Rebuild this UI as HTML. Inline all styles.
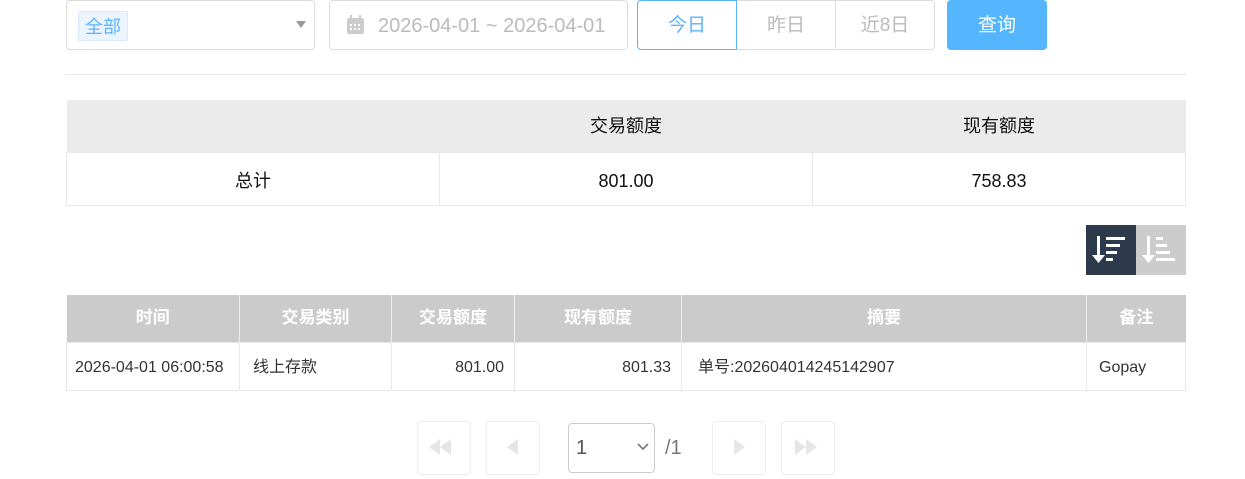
<!DOCTYPE html>
<html><head><meta charset="utf-8"><style>
body{margin:0;width:1245px;height:479px;background:#fff;font-family:"Liberation Sans","Noto Sans CJK SC",sans-serif;position:relative;overflow:hidden;color:#333}
.a{position:absolute;box-sizing:border-box}
table{border-collapse:collapse;position:absolute;table-layout:fixed}
td{box-sizing:border-box;vertical-align:middle;line-height:20px;white-space:nowrap;overflow:hidden}
.r td{padding-top:5px}
</style></head><body>
<div class="a" style="left:66px;top:0;width:249px;height:50px;border:1px solid #dcdcdc;border-radius:4px"></div>
<div class="a" style="left:78px;top:11px;width:50px;height:30px;background:#ecf5ff;border:1px solid #d9ecff;border-radius:2px;color:#5cb3ff;font-size:18px;line-height:30px;text-align:center">全部</div>
<div class="a" style="left:296px;top:21px;width:0;height:0;border-left:5px solid transparent;border-right:5px solid transparent;border-top:7px solid #999"></div>
<div class="a" style="left:329px;top:0;width:299px;height:50px;border:1px solid #dcdcdc;border-radius:4px"></div>
<svg class="a" style="left:345px;top:14px" width="22" height="22" viewBox="0 0 22 22"><rect x="2" y="4" width="17" height="16" rx="2" fill="#ccc"/><rect x="5" y="1" width="2" height="6" fill="#ccc"/><rect x="14" y="1" width="2" height="6" fill="#ccc"/><g fill="#fff"><rect x="5" y="10" width="2" height="2"/><rect x="9" y="10" width="2" height="2"/><rect x="13" y="10" width="2" height="2"/><rect x="5" y="14" width="2" height="2"/><rect x="9" y="14" width="2" height="2"/><rect x="13" y="14" width="2" height="2"/></g></svg>
<div class="a" style="left:378px;top:13px;font-size:20px;color:#bbb;line-height:26px">2026-04-01 ~ 2026-04-01</div>
<div class="a" style="left:637px;top:0;width:298px;height:50px;border:1px solid #dcdcdc;border-radius:4px"></div>
<div class="a" style="left:736px;top:0;width:1px;height:50px;background:#dcdcdc"></div>
<div class="a" style="left:835px;top:0;width:1px;height:50px;background:#dcdcdc"></div>
<div class="a" style="left:637px;top:0;width:100px;height:50px;border:1px solid #5cb3ff;border-radius:4px 0 0 4px;color:#5cb3ff;font-size:19px;line-height:50px;text-align:center">今日</div>
<div class="a" style="left:736px;top:0;width:100px;height:50px;color:#bbb;font-size:19px;line-height:52px;text-align:center">昨日</div>
<div class="a" style="left:835px;top:0;width:100px;height:50px;color:#bbb;font-size:19px;line-height:52px;text-align:center">近8日</div>
<div class="a" style="left:947px;top:0;width:100px;height:50px;background:#56b6fd;border-radius:4px;color:#fff;font-size:19px;line-height:52px;text-align:center">查询</div>
<div class="a" style="left:66px;top:74px;width:1120px;height:1px;background:#e8e8e8"></div>

<table style="left:66px;top:100px;width:1120px;font-size:18px;color:#111;text-align:center">
<tr style="background:#ebebeb;height:52px"><td style="width:373px"></td><td style="width:373px">交易额度</td><td>现有额度</td></tr>
<tr class="r" style="height:53px"><td style="border:1px solid #e8e8e8">总计</td><td style="border:1px solid #e8e8e8">801.00</td><td style="border:1px solid #e8e8e8">758.83</td></tr>
</table>

<div class="a" style="left:1086px;top:225px;width:50px;height:50px;background:#2d3a4b"></div>
<div class="a" style="left:1136px;top:225px;width:50px;height:50px;background:#ccc"></div>
<svg class="a" style="left:1086px;top:225px" width="100" height="50" viewBox="0 0 100 50"><g fill="#fff"><rect x="11" y="11" width="3" height="22"/><path d="M6 30 L19 30 L12.5 38 Z"/><rect x="20" y="12" width="19" height="3"/><rect x="20" y="19" width="14" height="3"/><rect x="20" y="26" width="11" height="3"/><rect x="20" y="33" width="7" height="3"/>
<rect x="61" y="11" width="3" height="22"/><path d="M56 30 L69 30 L62.5 38 Z"/><rect x="70" y="12" width="7" height="3"/><rect x="70" y="19" width="11" height="3"/><rect x="70" y="26" width="14" height="3"/><rect x="70" y="33" width="19" height="3"/></g></svg>

<table style="left:66px;top:295px;width:1120px;font-size:16px">
<tr style="background:#cbcbcb;color:#fff;font-weight:bold;height:47px;text-align:center;font-size:17px"><td style="width:173px;border-right:1px solid #eee">时间</td><td style="width:152px;border-right:1px solid #eee">交易类别</td><td style="width:123px;border-right:1px solid #eee">交易额度</td><td style="width:167px;border-right:1px solid #eee">现有额度</td><td style="width:405px;border-right:1px solid #eee">摘要</td><td>备注</td></tr>
<tr class="r" style="height:48px;color:#333"><td style="border:1px solid #e8e8e8;padding-left:8px">2026-04-01 06:00:58</td><td style="border:1px solid #e8e8e8;padding-left:13px">线上存款</td><td style="border:1px solid #e8e8e8;text-align:right;padding-right:10px">801.00</td><td style="border:1px solid #e8e8e8;text-align:right;padding-right:10px">801.33</td><td style="border:1px solid #e8e8e8;padding-left:16px">单号:202604014245142907</td><td style="border:1px solid #e8e8e8;padding-left:12px">Gopay</td></tr>
</table>

<div class="a" style="left:417px;top:421px;width:54px;height:54px;border:1px solid #eee;border-radius:4px"></div>
<div class="a" style="left:486px;top:421px;width:54px;height:54px;border:1px solid #eee;border-radius:4px"></div>
<div class="a" style="left:712px;top:421px;width:54px;height:54px;border:1px solid #eee;border-radius:4px"></div>
<div class="a" style="left:781px;top:421px;width:54px;height:54px;border:1px solid #eee;border-radius:4px"></div>
<svg class="a" style="left:0;top:0" width="1245" height="479"><g fill="#e6e6e6"><path d="M429 447 L440 439 L440 455 Z"/><path d="M440 447 L451 439 L451 455 Z"/><path d="M507 447 L518 439 L518 455 Z"/><path d="M745 447 L734 439 L734 455 Z"/><path d="M806 447 L795 439 L795 455 Z"/><path d="M817 447 L806 439 L806 455 Z"/></g>
<path d="M638 444 L643 449 L648 444" stroke="#777" stroke-width="1.6" fill="none"/></svg>
<div class="a" style="left:568px;top:423px;width:87px;height:50px;border:1px solid #ccc;border-radius:4px;font-size:20px;line-height:48px;padding-left:7px;color:#555">1</div>
<div class="a" style="left:665px;top:436px;font-size:20px;color:#777;line-height:24px">/1</div>
</body></html>
